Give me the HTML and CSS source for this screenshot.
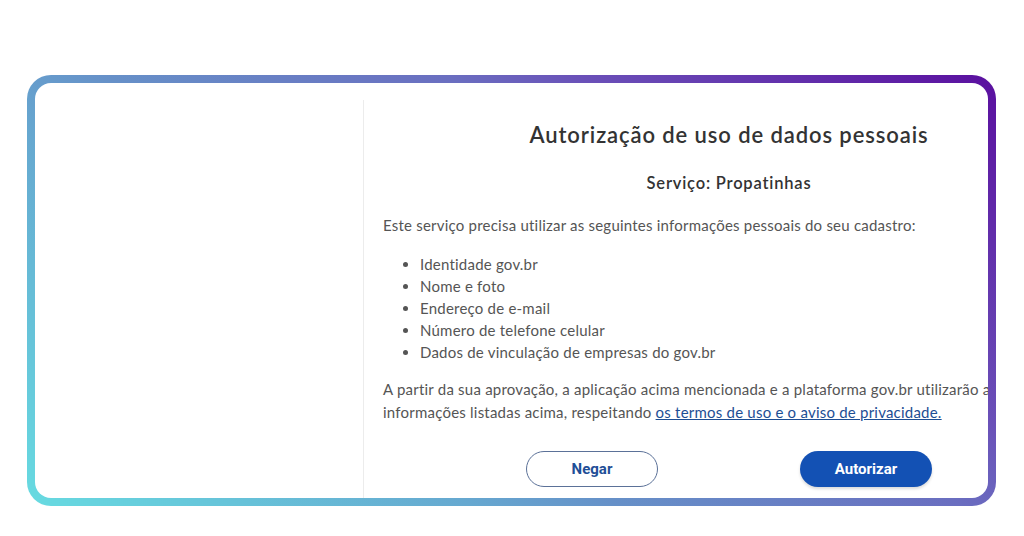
FILE: index.html
```html
<!DOCTYPE html>
<html lang="pt-BR">
<head>
<meta charset="utf-8">
<title>Autorização de uso de dados pessoais</title>
<link rel="stylesheet" href="styles.css">
</head>
<body>
<div class="page">
  <div class="card">
    <div class="side"></div>
    <div class="main">
      <h1 class="title">Autorização de uso de dados pessoais</h1>
      <h2 class="service">Serviço: Propatinhas</h2>
      <p class="intro">Este serviço precisa utilizar as seguintes informações pessoais do seu cadastro:</p>
      <ul class="scopes">
        <li>Identidade gov.br</li>
        <li>Nome e foto</li>
        <li>Endereço de e-mail</li>
        <li>Número de telefone celular</li>
        <li>Dados de vinculação de empresas do gov.br</li>
      </ul>
      <p class="terms">A partir da sua aprovação, a aplicação acima mencionada e a plataforma gov.br utilizarão as informações listadas acima, respeitando <a href="#" class="link">os termos de uso e o aviso de privacidade.</a></p>
      <div class="actions">
        <button class="btn btn-outline">Negar</button>
        <button class="btn btn-primary">Autorizar</button>
      </div>
    </div>
  </div>
</div>
</body>
</html>
```

FILE: styles.css
```css
html, body {
  margin: 0;
  padding: 0;
  background: #ffffff;
}

.page {
  width: 1024px;
  height: 536px;
  padding: 75px 0 0 27px;
  box-sizing: border-box;
}

.card {
  width: 969px;
  height: 431px;
  box-sizing: border-box;
  border: 8px solid transparent;
  border-radius: 24px;
  background:
    linear-gradient(#ffffff, #ffffff) padding-box,
    linear-gradient(40deg, #67dbe1 0%, #66a8d0 30%, #6690c8 40%, #6a6ec0 63%, #6a50b8 72%, #5a0f9f 100%) border-box;
  display: flex;
  overflow: hidden;
}

.side {
  width: 328px;
  flex: none;
}

.main {
  flex: none;
  width: 731px;
  margin-top: 17px;
  border-left: 1px solid #ececec;
  padding: 20px 19px 0 19px;
  box-sizing: border-box;
  font-family: Lato, "Liberation Sans", sans-serif;
  color: #555555;
}

.title {
  margin: 0;
  text-align: center;
  font-size: 22px;
  line-height: 30px;
  font-weight: 600;
  letter-spacing: 0.9px;
  color: #333333;
}

.service {
  margin: 22px 0 0 0;
  text-align: center;
  font-size: 16.5px;
  line-height: 22px;
  font-weight: 600;
  letter-spacing: 0.8px;
  color: #333333;
}

.intro {
  margin: 20px 0 0 0;
  font-size: 15px;
  line-height: 22px;
  letter-spacing: 0.22px;
}

.scopes {
  margin: 17px 0 0 0;
  padding-left: 37px;
  font-size: 15px;
  line-height: 22px;
  letter-spacing: 0.22px;
}

.terms {
  margin: 15px 0 0 0;
  font-size: 15px;
  line-height: 23px;
  letter-spacing: 0.22px;
}

.link {
  color: #1d4e94;
  text-decoration: underline;
}

.actions {
  margin-top: 27px;
  display: flex;
  justify-content: center;
  gap: 142px;
}

.btn {
  width: 132px;
  height: 36px;
  border-radius: 18px;
  font-family: Roboto, "Liberation Sans", sans-serif;
  font-size: 15px;
  font-weight: 700;
  cursor: pointer;
}

.btn-outline {
  background: #ffffff;
  border: 1px solid #5b7198;
  color: #1f4f97;
}

.btn-primary {
  background: #1351b4;
  border: none;
  color: #ffffff;
  box-shadow: 0 2px 3px rgba(0, 0, 0, 0.15);
}
```
